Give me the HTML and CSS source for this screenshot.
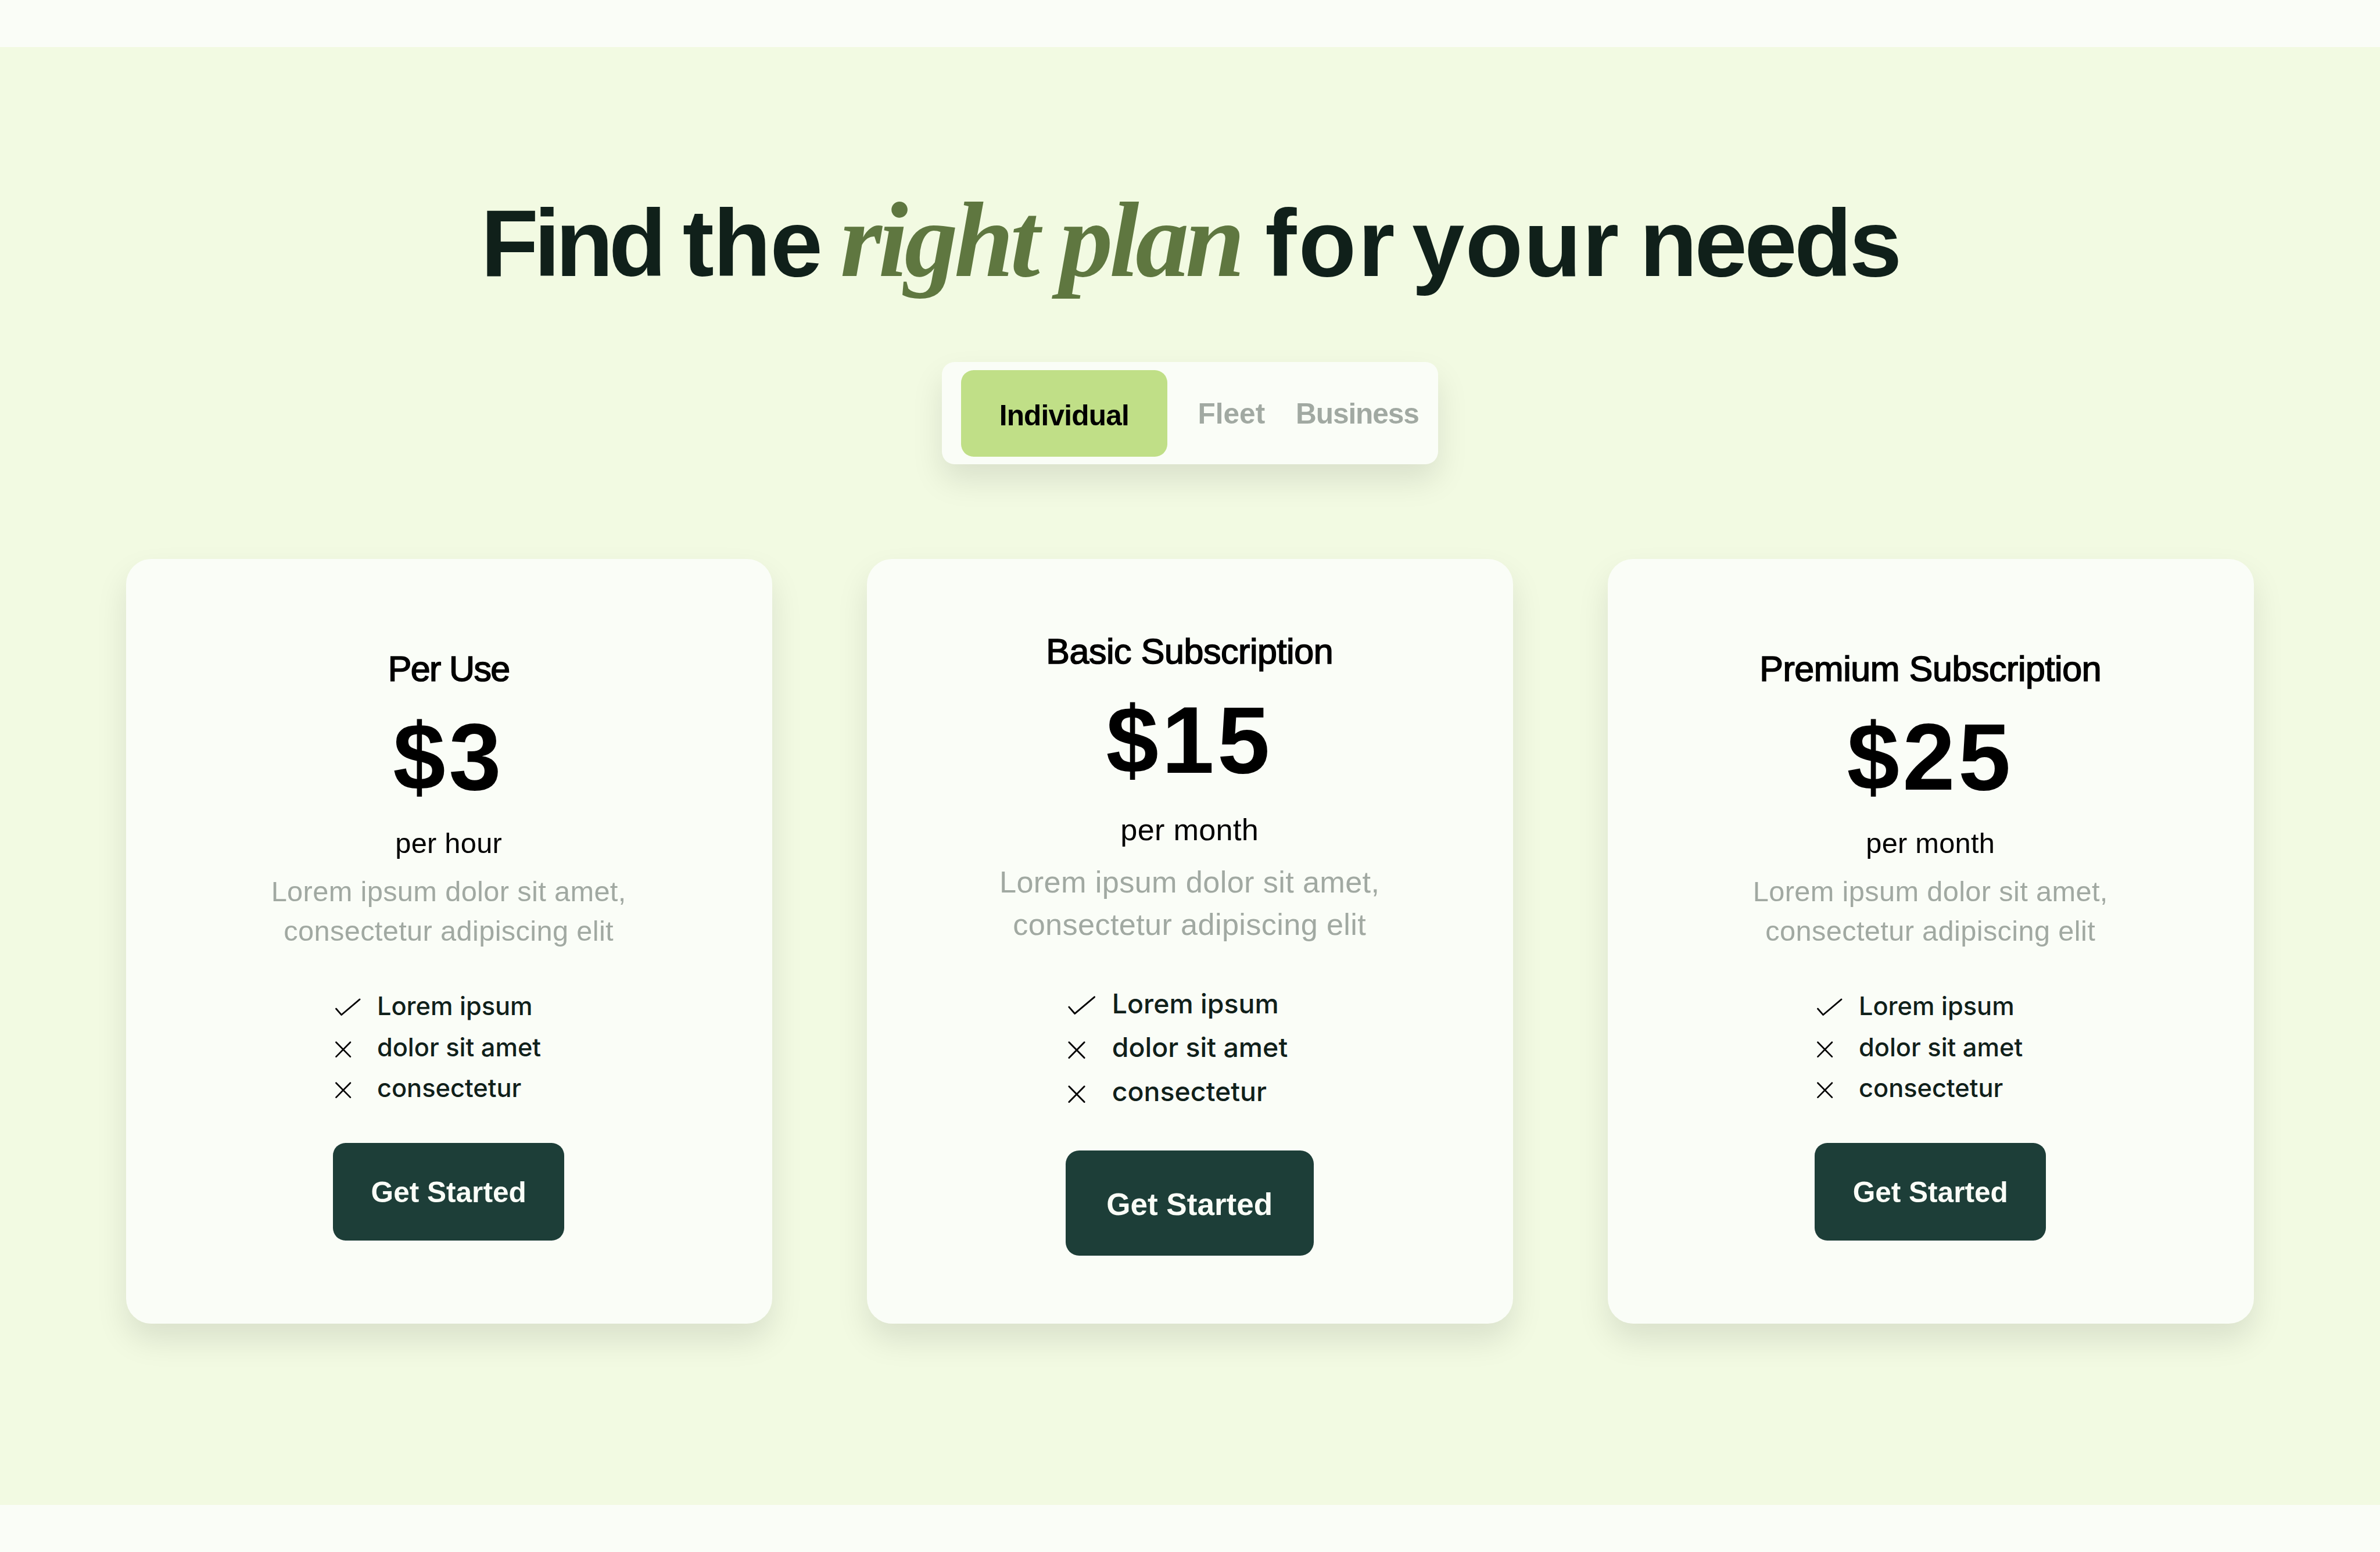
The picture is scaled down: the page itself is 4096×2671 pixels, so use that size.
FILE: index.html
```html
<!DOCTYPE html>
<html lang="en">
<head>
  <meta charset="UTF-8" />
  <meta name="viewport" content="width=device-width, initial-scale=1.0" />
  <title>Pricing</title>
  <link rel="stylesheet" href="styles.css">
</head>
<body>
  <section class="pricing">
    <h1 class="heading"><span class="find">Find</span> <span class="the">the</span> <em>right plan</em> <span class="for">for</span> <span class="your">your</span> <span class="needs">needs</span></h1>

    <div class="tabs">
      <div class="tab active">Individual</div>
      <div class="tab">Fleet</div>
      <div class="tab business">Business</div>
    </div>

    <div class="cards">
      <div class="card">
        <h2 class="plan short">Per Use</h2>
        <div class="price">$3</div>
        <div class="period">per hour</div>
        <p class="desc">Lorem ipsum dolor sit amet,<br>consectetur adipiscing elit</p>
        <ul class="features">
          <li><svg class="icon" viewBox="0 0 80 104"><path d="M8 59.1L21.7 74.7L68.1 35.3" /></svg>Lorem ipsum</li>
          <li><svg class="icon" viewBox="0 0 80 104"><path d="M8 39.5L44.2 76.2M44.2 39.5L8 76.2" /></svg>dolor sit amet</li>
          <li><svg class="icon" viewBox="0 0 80 104"><path d="M8 39.5L44.2 76.2M44.2 39.5L8 76.2" /></svg>consectetur</li>
        </ul>
        <button class="btn">Get Started</button>
      </div>

      <div class="card featured">
        <h2 class="plan">Basic Subscription</h2>
        <div class="price">$15</div>
        <div class="period">per month</div>
        <p class="desc">Lorem ipsum dolor sit amet,<br>consectetur adipiscing elit</p>
        <ul class="features">
          <li><svg class="icon" viewBox="0 0 80 104"><path d="M8 59.1L21.7 74.7L68.1 35.3" /></svg>Lorem ipsum</li>
          <li><svg class="icon" viewBox="0 0 80 104"><path d="M8 39.5L44.2 76.2M44.2 39.5L8 76.2" /></svg>dolor sit amet</li>
          <li><svg class="icon" viewBox="0 0 80 104"><path d="M8 39.5L44.2 76.2M44.2 39.5L8 76.2" /></svg>consectetur</li>
        </ul>
        <button class="btn">Get Started</button>
      </div>

      <div class="card">
        <h2 class="plan">Premium Subscription</h2>
        <div class="price">$25</div>
        <div class="period">per month</div>
        <p class="desc">Lorem ipsum dolor sit amet,<br>consectetur adipiscing elit</p>
        <ul class="features">
          <li><svg class="icon" viewBox="0 0 80 104"><path d="M8 59.1L21.7 74.7L68.1 35.3" /></svg>Lorem ipsum</li>
          <li><svg class="icon" viewBox="0 0 80 104"><path d="M8 39.5L44.2 76.2M44.2 39.5L8 76.2" /></svg>dolor sit amet</li>
          <li><svg class="icon" viewBox="0 0 80 104"><path d="M8 39.5L44.2 76.2M44.2 39.5L8 76.2" /></svg>consectetur</li>
        </ul>
        <button class="btn">Get Started</button>
      </div>
    </div>
  </section>
</body>
</html>
```

FILE: styles.css
```css
* {
  box-sizing: border-box;
  margin: 0;
  padding: 0;
}
/* 1rem = 10px on a 1512px wide layout */
html {
  font-size: calc(100vw / 151.2);
}
body {
  background: #fafdf7;
  font-family: "Liberation Sans", Arial, sans-serif;
  color: #000;
  padding: 3rem 0;
  overflow: hidden;
}
.pricing {
  height: 92.6rem;
  padding: 8.85rem 8rem 0;
  background: #f2fae2;
  display: flex;
  flex-direction: column;
  align-items: center;
}

.heading {
  font-size: 6rem;
  line-height: 7.2rem;
  font-weight: bold;
  word-spacing: -0.4rem;
  color: #10201a;
  white-space: nowrap;
  margin-bottom: 3.95rem;
}
.heading em {
  font-family: "Liberation Serif", "Times New Roman", serif;
  font-size: 6.8rem;
  line-height: 0;
  letter-spacing: -0.23rem;
  word-spacing: 0;
  color: #5f7740;
  margin-left: -0.1rem;
  margin-right: 0.25rem;
}
.find { letter-spacing: -0.29rem; margin-right: 0.05rem; }
.the { letter-spacing: -0.05rem; }
.for { letter-spacing: 0.12rem; margin-right: -0.3rem; }
.your { letter-spacing: 0.05rem; }
.needs { letter-spacing: -0.17rem; }

.tabs {
  display: flex;
  align-items: center;
  gap: 1.95rem;
  width: 31.5rem;
  height: 6.5rem;
  padding: 0.5rem 1.2rem;
  background: #fafdf7;
  border-radius: 0.8rem;
  box-shadow: 0 1rem 2rem rgba(0, 0, 0, 0.1);
  margin-bottom: 6rem;
}
.tab {
  font-size: 1.83rem;
  line-height: 2.2rem;
  font-weight: bold;
  color: #a1a9a2;
  flex: none;
  padding-top: 0.12rem;
}
.tab.active {
  width: 13.1rem;
  height: 5.5rem;
  padding-top: 1.84rem;
  text-align: center;
  letter-spacing: -0.03rem;
  color: #000;
  background: #c0df87;
  border-radius: 0.8rem;
}
.tab.business {
  letter-spacing: -0.04rem;
}

.cards {
  display: flex;
  gap: 6rem;
  width: 100%;
}
.card {
  flex: 1;
  height: 48.6rem;
  padding-top: 5.65rem;
  padding-right: 0.06rem;
  background: #fafdf7;
  border-radius: 1.6rem;
  box-shadow: 0 1rem 2rem rgba(0, 0, 0, 0.1);
  display: flex;
  flex-direction: column;
  align-items: center;
}
.plan {
  font-size: 2.25rem;
  line-height: 2.7rem;
  font-weight: normal;
  letter-spacing: -0.015rem;
  -webkit-text-stroke: 0.06rem #000;
}
.plan.short {
  letter-spacing: -0.06rem;
}
.price {
  font-size: 6rem;
  line-height: 6rem;
  font-weight: bold;
  letter-spacing: 0.2rem;
  margin-top: 1.26rem;
}
.period {
  font-size: 1.8rem;
  line-height: 2.5rem;
  letter-spacing: 0.01rem;
  margin-top: 1.22rem;
}
.desc {
  font-size: 1.8rem;
  line-height: 2.5rem;
  letter-spacing: 0.013rem;
  text-align: center;
  color: #a1a9a2;
  margin-top: 0.59rem;
}
.features {
  width: 14.7rem;
  list-style: none;
  margin-top: 2.2rem;
}
.features li {
  display: flex;
  gap: 0.8rem;
  font-family: Inter, sans-serif;
  font-size: 1.6rem;
  line-height: 2.6rem;
  font-weight: 500;
  color: #10201a;
  white-space: nowrap;
}
.icon {
  flex: none;
  width: 2rem;
  height: 2.6rem;
  fill: none;
  stroke: #000;
  stroke-width: 4;
  stroke-linecap: round;
  stroke-linejoin: round;
}
.btn {
  width: 14.7rem;
  height: 6.2rem;
  border: none;
  border-radius: 0.8rem;
  background: #1d3e38;
  color: #fafdf7;
  font-family: inherit;
  font-size: 1.83rem;
  font-weight: bold;
  padding-top: 0.1rem;
  margin-top: 2.19rem;
  cursor: pointer;
}

.featured {
  padding-top: 4.55rem;
}
.featured .price {
  margin-top: 1.28rem;
}
.featured .period {
  font-size: 1.93rem;
  line-height: 2.68rem;
  margin-top: 1.34rem;
}
.featured .desc {
  font-size: 1.93rem;
  line-height: 2.68rem;
  margin-top: 0.67rem;
}
.featured .features {
  width: 15.75rem;
  margin-top: 2.29rem;
}
.featured .features li {
  font-size: 1.715rem;
  line-height: 2.8rem;
}
.featured .icon {
  width: 2.15rem;
  height: 2.8rem;
}
.featured .btn {
  width: 15.75rem;
  height: 6.7rem;
  border-radius: 0.86rem;
  font-size: 1.96rem;
  margin-top: 2.32rem;
}
```
